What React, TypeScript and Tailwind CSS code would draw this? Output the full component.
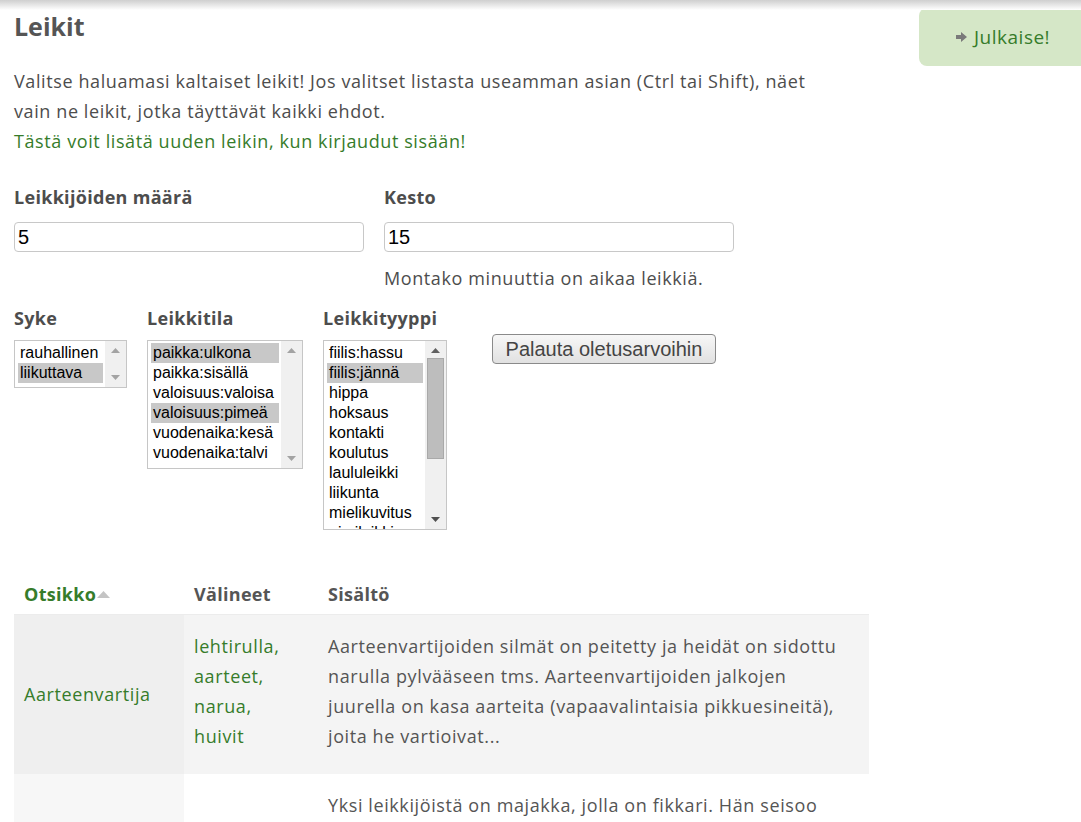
import React from "react";

const font = { fontFamily: "'Open Sans', 'DejaVu Sans', sans-serif" };

function ArrowUp({ dark }: { dark?: boolean }) {
  return (
    <svg width="9" height="5" viewBox="0 0 9 5">
      <polygon points="0,5 9,5 4.5,0" fill={dark ? "#606060" : "#a3a3a3"} />
    </svg>
  );
}
function ArrowDown({ dark }: { dark?: boolean }) {
  return (
    <svg width="9" height="5" viewBox="0 0 9 5">
      <polygon points="0,0 9,0 4.5,5" fill={dark ? "#505050" : "#a3a3a3"} />
    </svg>
  );
}

function ListBox({
  items,
  selected,
  width,
  height,
  thumb,
}: {
  items: string[];
  selected: number[];
  width: number;
  height: number;
  thumb?: boolean;
}) {
  return (
    <div
      className="flex border border-[#c6c6c6] bg-white overflow-hidden"
      style={{ width, height }}
    >
      <div
        className="flex-1 pt-[2px] pl-[3px] pr-[2px] overflow-hidden text-[16px] tracking-normal text-black"
        style={{ fontFamily: "'Liberation Sans', Arial, sans-serif" }}
      >
        {items.map((it, i) => (
          <div
            key={it}
            className={`h-[20px] leading-[20px] pl-[2px] whitespace-nowrap ${
              selected.includes(i) ? "bg-[#c8c8c8]" : ""
            }`}
          >
            {it}
          </div>
        ))}
      </div>
      <div className="w-[21px] bg-[#f0f0f0] flex flex-col items-center py-[7px] relative">
        <ArrowUp dark={thumb} />
        {thumb ? (
          <div className="mt-[5px] w-[17px] h-[101px] bg-[#bdbdbd] border border-[#a9a9a9]" />
        ) : null}
        <div className="flex-1" />
        <ArrowDown dark={thumb} />
      </div>
    </div>
  );
}

export default function App() {
  return (
    <div className="relative min-h-[822px] bg-white overflow-hidden text-[#4d4d4d]" style={font}>
      <div className="absolute top-0 left-0 right-0 h-[10px] bg-gradient-to-b from-[#cfcfcf] to-white pointer-events-none" />
      <div className="flex">
        <div className="w-[855px] ml-[14px] shrink-0">
          <h1 className="pt-[9px] text-[25px] leading-[34px] font-bold text-[#555]">Leikit</h1>
          <div className="mt-[23px] text-[18px] leading-[30px] tracking-[0.6px]">
            <p>
              Valitse haluamasi kaltaiset leikit! Jos valitset listasta useamman asian (Ctrl tai Shift), näet
              <br />
              vain ne leikit, jotka täyttävät kaikki ehdot.
            </p>
            <p className="text-[#367c2b]">Tästä voit lisätä uuden leikin, kun kirjaudut sisään!</p>
          </div>

          <div className="mt-[26px] flex gap-[20px]">
            <div className="w-[350px]">
              <div className="font-bold text-[18px] leading-[30px] tracking-[0.3px]">Leikkijöiden määrä</div>
              <div
                className="mt-[10px] h-[30px] border border-[#c8c8c8] rounded-[4px] px-[3px] text-[20px] leading-[28px] text-black"
                style={{ fontFamily: "'Liberation Sans', Arial, sans-serif" }}
              >
                5
              </div>
            </div>
            <div className="w-[350px]">
              <div className="font-bold text-[18px] leading-[30px] tracking-[0.3px]">Kesto</div>
              <div
                className="mt-[10px] h-[30px] border border-[#c8c8c8] rounded-[4px] px-[3px] text-[20px] leading-[28px] text-black"
                style={{ fontFamily: "'Liberation Sans', Arial, sans-serif" }}
              >
                15
              </div>
              <div className="mt-[11px] text-[18px] leading-[30px] tracking-[0.6px]">
                Montako minuuttia on aikaa leikkiä.
              </div>
            </div>
          </div>

          <div className="mt-[10px] flex items-start">
            <div className="w-[133px]">
              <div className="font-bold text-[18px] leading-[30px] tracking-[0.3px]">Syke</div>
              <div className="mt-[7px]">
                <ListBox items={["rauhallinen", "liikuttava"]} selected={[1]} width={113} height={48} />
              </div>
            </div>
            <div className="w-[176px]">
              <div className="font-bold text-[18px] leading-[30px] tracking-[0.3px]">Leikkitila</div>
              <div className="mt-[7px]">
                <ListBox
                  items={[
                    "paikka:ulkona",
                    "paikka:sisällä",
                    "valoisuus:valoisa",
                    "valoisuus:pimeä",
                    "vuodenaika:kesä",
                    "vuodenaika:talvi",
                  ]}
                  selected={[0, 3]}
                  width={156}
                  height={129}
                />
              </div>
            </div>
            <div className="w-[169px]">
              <div className="font-bold text-[18px] leading-[30px] tracking-[0.3px]">Leikkityyppi</div>
              <div className="mt-[7px]">
                <ListBox
                  items={[
                    "fiilis:hassu",
                    "fiilis:jännä",
                    "hippa",
                    "hoksaus",
                    "kontakti",
                    "koulutus",
                    "laululeikki",
                    "liikunta",
                    "mielikuvitus",
                    "nimileikki",
                  ]}
                  selected={[1]}
                  width={124}
                  height={190}
                  thumb
                />
              </div>
            </div>
            <button
              className="mt-[31px] h-[30px] w-[224px] border border-[#8a8a8a] rounded-[4px] bg-gradient-to-b from-[#f7f7f7] to-[#e1e1e1] text-[20px] leading-[26px] text-[#444]"
              style={{ fontFamily: "'Liberation Sans', Arial, sans-serif" }}
            >
              Palauta oletusarvoihin
            </button>
          </div>

          <table className="mt-[45px] w-full border-collapse text-[18px] leading-[30px] tracking-[0.6px]">
            <thead>
              <tr className="h-[39px]">
                <th className="w-[170px] text-left font-bold tracking-[0.3px] pl-[10px] text-[#367c2b] align-middle">
                  <span className="inline-flex items-center">
                    Otsikko
                    <svg width="13" height="7" viewBox="0 0 13 7" className="ml-[1px] mt-[1px]">
                      <polygon points="0,7 13,7 6.5,0" fill="#c4c4c4" />
                    </svg>
                  </span>
                </th>
                <th className="w-[134px] text-left font-bold tracking-[0.3px] pl-[10px] text-[#555]">Välineet</th>
                <th className="text-left font-bold tracking-[0.3px] pl-[10px] text-[#555]">Sisältö</th>
              </tr>
            </thead>
            <tbody>
              <tr className="border-t border-[#ececec]">
                <td className="bg-[#efefef] pl-[10px] align-middle text-[#367c2b]">Aarteenvartija</td>
                <td className="bg-[#f4f4f4] pl-[10px] pt-[16px] pb-[23px] text-[#367c2b] align-top">
                  lehtirulla,
                  <br />
                  aarteet,
                  <br />
                  narua,
                  <br />
                  huivit
                </td>
                <td className="bg-[#f4f4f4] pl-[10px] pr-[14px] pt-[16px] pb-[23px] align-top text-[#555]">
                  Aarteenvartijoiden silmät on peitetty ja heidät on sidottu narulla pylvääseen tms.
                  Aarteenvartijoiden jalkojen juurella on kasa aarteita (vapaavalintaisia pikkuesineitä), joita
                  he vartioivat...
                </td>
              </tr>
              <tr>
                <td className="bg-[#f7f7f7] pl-[10px]"></td>
                <td className="pl-[10px]"></td>
                <td className="pl-[10px] pr-[14px] pt-[16px] pb-[22px] align-top text-[#555]">
                  Yksi leikkijöistä on majakka, jolla on fikkari. Hän seisoo keskellä pimeää huonetta ja
                  valaisee ympäristöään.
                </td>
              </tr>
            </tbody>
          </table>
        </div>
        <div className="ml-auto shrink-0">
          <div className="mt-[8px] -mr-[10px] w-[172px] h-[58px] rounded-[8px] bg-[#d5e7c7] flex items-center pl-[37px] text-[19px] tracking-[0.5px] text-[#367c2b]">
            <svg width="11" height="10" viewBox="0 0 11 10" className="mr-[7px]">
              <polygon points="0,3 5,3 5,0 11,5 5,10 5,7 0,7" fill="#7a7a7a" />
            </svg>
            Julkaise!
          </div>
        </div>
      </div>
    </div>
  );
}
